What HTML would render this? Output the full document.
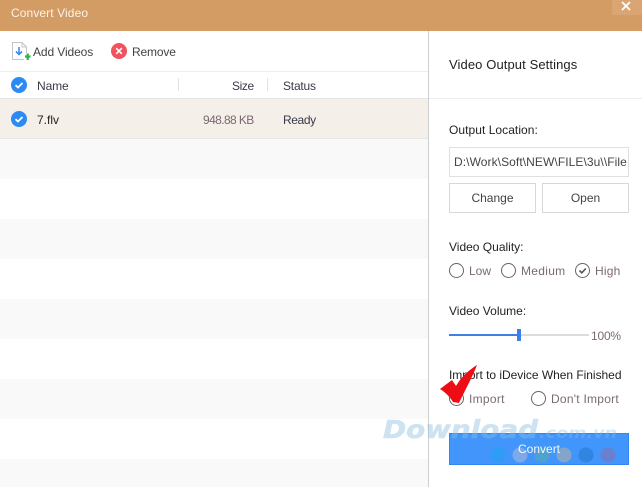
<!DOCTYPE html>
<html><head><meta charset="utf-8">
<style>
html,body{margin:0;padding:0;background:#fff}
#p{position:relative;width:642px;height:487px;overflow:hidden;background:#fff;font-family:"Liberation Sans",sans-serif;font-size:12px;color:#3a3a48}
#p div,#p span.t{position:absolute;white-space:nowrap}
.t{line-height:16px}
.stripe{left:0;width:428px;height:40px;background:#f9f9f9}
.dark{color:#222}
.mut{color:#7a6a72}
.btn{border:1px solid #d8d8d8;box-sizing:border-box;height:30px;top:183px;text-align:center;line-height:28px;color:#444}
svg{position:absolute;overflow:visible}
</style></head><body><div id="p">
<div style="left:0;top:0;width:642px;height:31px;background:#d39c64"></div>
<div style="left:612px;top:0;width:30px;height:15px;background:#d9a673"></div>
<svg style="left:620px;top:0" width="14" height="12"><path d="M2 2L10 10M10 2L2 10" stroke="#fff" stroke-width="1.8"/></svg>
<span class="t" style="left:11px;top:5px;color:#fbf3ea;letter-spacing:.1px">Convert Video</span>

<svg style="left:12px;top:42px" width="18" height="20"><path d="M14.5 11V5L10 .5H.5V17.5H12" fill="#fff" stroke="#c4c4c4"/><path d="M10 .5V5H14.5" fill="none" stroke="#c4c4c4"/><path d="M7 5V12M4 9.5L7 12.5L10 9.5" fill="none" stroke="#3b8df0" stroke-width="1.6"/><path d="M13 14.5H18.5M15.7 11.5V18" stroke="#2eb24b" stroke-width="2.2"/></svg>
<span class="t" style="left:33px;top:44px;color:#444;letter-spacing:-.1px">Add Videos</span>
<svg style="left:111px;top:43px" width="16" height="16"><circle cx="8" cy="8" r="8" fill="#f0535d"/><path d="M5.2 5.2L10.8 10.8M10.8 5.2L5.2 10.8" stroke="#fff" stroke-width="1.6"/></svg>
<span class="t" style="left:132px;top:44px;color:#444;letter-spacing:-.15px">Remove</span>

<div style="left:0;top:71px;width:428px;height:1px;background:#eee"></div>
<div style="left:178px;top:78px;width:1px;height:13px;background:#e2e2e2"></div>
<div style="left:267px;top:78px;width:1px;height:13px;background:#e2e2e2"></div>
<svg style="left:11px;top:77px" width="16" height="16"><circle cx="8" cy="8" r="8" fill="#2b8bf2"/><path d="M4.5 8.2L7 10.5L11.5 6" fill="none" stroke="#fff" stroke-width="1.8"/></svg>
<span class="t" style="left:37px;top:78px;letter-spacing:-.1px">Name</span>
<span class="t" style="left:232px;top:78px;letter-spacing:-.4px">Size</span>
<span class="t" style="left:283px;top:78px;letter-spacing:-.2px">Status</span>

<div style="left:0;top:98px;width:428px;height:41px;background:#f5efe9;border-top:1px solid #e4e4e4;border-bottom:1px solid #e6e6e6;box-sizing:border-box"></div>
<svg style="left:11px;top:111px" width="16" height="16"><circle cx="8" cy="8" r="8" fill="#2b8bf2"/><path d="M4.5 8.2L7 10.5L11.5 6" fill="none" stroke="#fff" stroke-width="1.8"/></svg>
<span class="t dark" style="left:37px;top:112px">7.flv</span>
<span class="t mut" style="left:203px;top:112px;letter-spacing:-.6px">948.88 KB</span>
<span class="t" style="left:283px;top:112px;letter-spacing:-.4px">Ready</span>

<div class="stripe" style="top:139px"></div>
<div class="stripe" style="top:219px"></div>
<div class="stripe" style="top:299px"></div>
<div class="stripe" style="top:379px"></div>
<div class="stripe" style="top:459px;height:28px"></div>
<div style="left:428px;top:31px;width:1px;height:456px;background:#cfcfcf"></div>
<div style="left:429px;top:98px;width:213px;height:1px;background:#eee"></div>

<span class="t dark" style="left:449px;top:57px;font-size:13px;letter-spacing:.1px">Video Output Settings</span>
<span class="t dark" style="left:449px;top:122px;letter-spacing:.05px">Output Location:</span>
<div style="left:449px;top:147px;width:180px;height:30px;border:1px solid #e0e0e0;box-sizing:border-box;line-height:28px;padding-left:4px;color:#444;overflow:hidden;font-size:12px;letter-spacing:.08px">D:\Work\Soft\NEW\FILE\3u\\File</div>
<div class="btn" style="left:449px;width:87px">Change</div>
<div class="btn" style="left:542px;width:87px">Open</div>

<span class="t dark" style="left:449px;top:239px">Video Quality:</span>
<svg style="left:449px;top:263px" width="16" height="16"><circle cx="7.5" cy="7.5" r="7" fill="#fff" stroke="#666"/></svg>
<span class="t mut" style="left:469px;top:263px">Low</span>
<svg style="left:501px;top:263px" width="16" height="16"><circle cx="7.5" cy="7.5" r="7" fill="#fff" stroke="#666"/></svg>
<span class="t mut" style="left:521px;top:263px;letter-spacing:.3px">Medium</span>
<svg style="left:575px;top:263px" width="16" height="16"><circle cx="7.5" cy="7.5" r="7" fill="#fff" stroke="#666"/><path d="M4.5 7.5L6.8 9.8L10.8 5.5" fill="none" stroke="#555" stroke-width="1.6"/></svg>
<span class="t mut" style="left:595px;top:263px;letter-spacing:.2px">High</span>

<span class="t dark" style="left:449px;top:303px">Video Volume:</span>
<div style="left:449px;top:334px;width:140px;height:2px;background:#dcdcdc"></div>
<div style="left:449px;top:334px;width:70px;height:2px;background:#3f7fe6"></div>
<div style="left:517px;top:329px;width:4px;height:12px;background:#3f7fe6"></div>
<span class="t mut" style="left:591px;top:328px;letter-spacing:-.2px">100%</span>

<span class="t dark" style="left:449px;top:367px;letter-spacing:-.03px">Import to iDevice When Finished</span>
<svg style="left:449px;top:391px" width="16" height="16"><circle cx="7.5" cy="7.5" r="7" fill="#fff" stroke="#666"/></svg>
<span class="t mut" style="left:469px;top:391px;letter-spacing:.3px">Import</span>
<svg style="left:531px;top:391px" width="16" height="16"><circle cx="7.5" cy="7.5" r="7" fill="#fff" stroke="#666"/></svg>
<span class="t mut" style="left:551px;top:391px;letter-spacing:.25px">Don't Import</span>
<svg style="left:440px;top:362px" width="40" height="44"><path d="M0 27L12 18L16 24C21 15 29 8 37 3C33 14 25 28 19 41L13 40C10 35 5 30 0 27Z" fill="#ee0d14"/></svg>

<div style="left:449px;top:433px;width:180px;height:32px;background:#4195fb;border:1px solid #2f86f5;box-sizing:border-box"></div>
<svg style="left:380px;top:410px" width="262" height="60"><text x="3" y="28" font-family="DejaVu Sans" font-weight="700" font-style="italic" font-size="25" fill="#8bbde0" opacity=".42" stroke="#8bbde0" stroke-width=".6" textLength="155" lengthAdjust="spacingAndGlyphs">Download</text><text x="159" y="28" font-family="DejaVu Sans" font-weight="700" font-style="italic" font-size="15" fill="#8bbde0" opacity=".35" textLength="78" lengthAdjust="spacingAndGlyphs">.com.vn</text><circle cx="118" cy="45" r="7.5" fill="#2f9cf5"/><circle cx="140" cy="45" r="7.5" fill="#7fa8e8"/><circle cx="162" cy="45" r="7.5" fill="#4fa2cf"/><circle cx="184" cy="45" r="7.5" fill="#83a5cc"/><circle cx="206" cy="45" r="7.5" fill="#2f85e0"/><circle cx="228" cy="45" r="7.5" fill="#6a7fd0"/></svg>
<span class="t" style="left:518px;top:441px;color:#f4f8ff">Convert</span>
</div></body></html>
